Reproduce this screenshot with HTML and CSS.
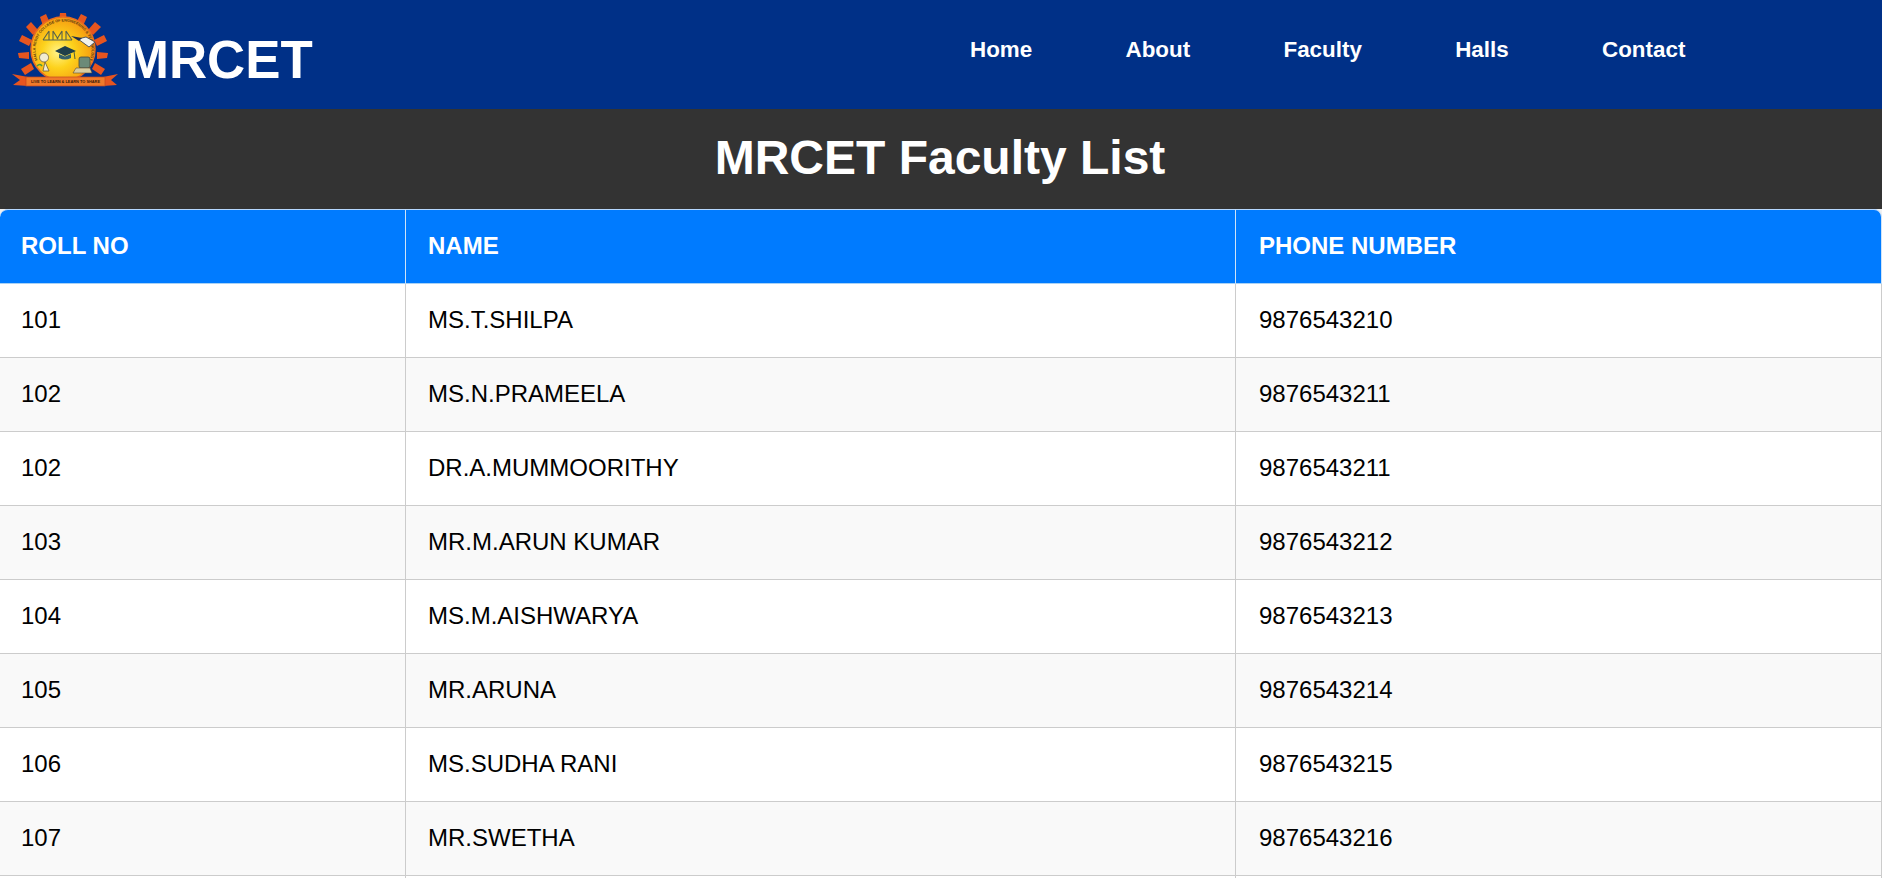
FILE: index.html
```html
<!DOCTYPE html>
<html lang="en">
<head>
<meta charset="utf-8">
<title>MRCET Faculty List</title>
<link rel="stylesheet" href="styles.css">
</head>
<body>
<header class="navbar">
  <div class="brand">
    <svg class="logo" viewBox="0 0 110 84" aria-hidden="true">
      <defs>
        <radialGradient id="sun" cx="0.42" cy="0.55" r="0.62">
          <stop offset="0" stop-color="#fff48a"/>
          <stop offset="0.4" stop-color="#fdd21c"/>
          <stop offset="0.8" stop-color="#f7a612"/>
          <stop offset="1" stop-color="#ef7f1a"/>
        </radialGradient>
        <path id="arc" d="M29 54 A28 28 0 1 1 78 54"/>
      </defs>
      <g fill="#e6551f">
        <polygon points="50,4 56,4 57,13 49,13"/>
        <polygon points="30,8 36,5 40,14 33,17"/>
        <polygon points="71,5 77,8 73,17 66,14"/>
        <polygon points="16,18 21,13 28,21 23,26"/>
        <polygon points="85,13 91,18 83,26 78,21"/>
        <polygon points="9,32 12,26 22,31 19,37"/>
        <polygon points="94,26 97,32 87,37 84,31"/>
        <polygon points="8,44 19,43 19,50 9,49"/>
        <polygon points="87,43 98,44 97,49 87,50"/>
        <polygon points="11,60 21,54 24,60 15,66"/>
        <polygon points="85,54 95,60 91,66 82,60"/>
      </g>
      <circle cx="53" cy="40" r="32" fill="url(#sun)" stroke="#e96d20" stroke-width="1.5"/>
      <text class="logo-arc"><textPath href="#arc" startOffset="50%" text-anchor="middle">MALLA REDDY COLLEGE OF ENGINEERING &amp; TECHNOLOGY</textPath></text>
      <g fill="none" stroke="#55604e" stroke-width="1.1">
        <path d="M33 31 L62 31 M39 31 L39 22 M43 31 L43 22 M52 31 L52 22 M56 31 L56 22 M39 22 L33 31 M43 22 L48 30 M52 22 L47 30 M56 22 L62 31"/>
      </g>
      <path d="M68 30 L76 28 L85 33 L79 38 Z" fill="#f2f2ee" stroke="#2b3a55" stroke-width="0.8"/>
      <path d="M61 27 L72 29 L69 32 Z" fill="#1f2e4d"/>
      <path d="M45 42 L55 37 L66 42 L55 47 Z" fill="#1f3f4a"/>
      <path d="M49 45 L49 49 Q55 52 61 49 L61 45 L55 47.5 Z" fill="#35606a"/>
      <path d="M64 42.5 L65 50" stroke="#1f3f4a" stroke-width="0.8"/>
      <path d="M34 44 a4.5 4.5 0 1 0 .1 0 Z M35 53 L33 62 L39 62 Z" fill="#f1ecd2" stroke="#6a5a3a" stroke-width="0.8"/>
      <path d="M27 57 q3 -3 5 0" stroke="#4a9a3a" stroke-width="1.6" fill="none"/>
      <rect x="69" y="48" width="11" height="11" rx="2" fill="#6c8a78" stroke="#4a4a3a" stroke-width="0.8"/>
      <path d="M63 64 L82 64 L80 59 L66 59 Z" fill="#d9cda0" stroke="#5a4a30" stroke-width="0.6"/>
      <polygon points="2,65 18,68 18,77 3,76 10,71" fill="#e6551f"/>
      <polygon points="108,65 93,68 93,77 107,76 101,71" fill="#e6551f"/>
      <rect x="16" y="68" width="79" height="9" fill="#f07a2a" stroke="#c2461f" stroke-width="0.7"/>
      <text class="logo-motto" x="55.5" y="74.2" text-anchor="middle">LIVE TO LEARN &amp; LEARN TO SHARE</text>
    </svg>
    <span class="brand-name">MRCET</span>
  </div>
  <nav class="menu">
    <a href="#">Home</a>
    <a href="#">About</a>
    <a href="#">Faculty</a>
    <a href="#">Halls</a>
    <a href="#">Contact</a>
  </nav>
</header>
<h1 class="page-title">MRCET Faculty List</h1>
<table class="faculty">
  <thead>
    <tr><th class="col-roll">ROLL NO</th><th class="col-name">NAME</th><th>PHONE NUMBER</th></tr>
  </thead>
  <tbody>
    <tr><td>101</td><td>MS.T.SHILPA</td><td>9876543210</td></tr>
    <tr><td>102</td><td>MS.N.PRAMEELA</td><td>9876543211</td></tr>
    <tr><td>102</td><td>DR.A.MUMMOORITHY</td><td>9876543211</td></tr>
    <tr><td>103</td><td>MR.M.ARUN KUMAR</td><td>9876543212</td></tr>
    <tr><td>104</td><td>MS.M.AISHWARYA</td><td>9876543213</td></tr>
    <tr><td>105</td><td>MR.ARUNA</td><td>9876543214</td></tr>
    <tr><td>106</td><td>MS.SUDHA RANI</td><td>9876543215</td></tr>
    <tr><td>107</td><td>MR.SWETHA</td><td>9876543216</td></tr>
    <tr><td></td><td></td><td></td></tr>
  </tbody>
</table>
</body>
</html>
```
FILE: styles.css
```css
* { box-sizing: border-box; }
html, body { margin: 0; padding: 0; }
body {
  font-family: "Liberation Sans", Arial, sans-serif;
  background: #f1f1f1;
  overflow: hidden;
  height: 878px;
}
.navbar {
  display: flex;
  align-items: center;
  height: 109px;
  background: #003087;
  color: #fff;
}
.brand {
  display: flex;
  align-items: center;
  gap: 5px;
  width: 970px;
  padding-left: 10px;
  flex: none;
}
.logo { width: 110px; height: 84px; flex: none; margin-top: -8px; }
.logo-arc { font: 700 3.7px "Liberation Sans", sans-serif; fill: #5b3a10; }
.logo-motto { font: 700 3.9px "Liberation Sans", sans-serif; fill: #3a1a08; }
.brand-name { font-size: 52.8px; font-weight: 700; line-height: 1; margin-top: 12px; }
.menu {
  display: flex;
  gap: 93.3px;
  margin-top: -10px;
}
.menu a {
  color: #fff;
  text-decoration: none;
  font-size: 22.4px;
  font-weight: 700;
}
.page-title {
  margin: 0;
  height: 100px;
  padding-right: 2px;
  background: #333;
  color: #fff;
  text-align: center;
  font-size: 48px;
  font-weight: 700;
  line-height: 98px;
}
.faculty {
  width: 1882px;
  table-layout: fixed;
  border-collapse: separate;
  border-spacing: 0;
}
.col-roll { width: 406px; }
.col-name { width: 830px; }
.faculty th, .faculty td {
  text-align: left;
  height: 74px;
  padding: 0 0 1px 22px;
  border-right: 1px solid #ccc;
  border-bottom: 1px solid #ccc;
  font-size: 24px;
}
.faculty th:first-child, .faculty td:first-child { padding-left: 21px; }
.faculty th:last-child, .faculty td:last-child { padding-left: 23px; }
.faculty th {
  height: 75px;
  padding-bottom: 2px;
  background: #007bff;
  color: #fff;
  font-weight: 700;
  border-top: 1px solid #b6d8ff;
  border-bottom-color: #a9d2f5;
  border-right-color: #cfe3f7;
}
.faculty th:first-child { border-top-left-radius: 8px; }
.faculty th:last-child { border-top-right-radius: 8px; }
.faculty td { color: #000; background: #fff; }
.faculty tbody tr:nth-child(even) td { background: #f9f9f9; }
```
